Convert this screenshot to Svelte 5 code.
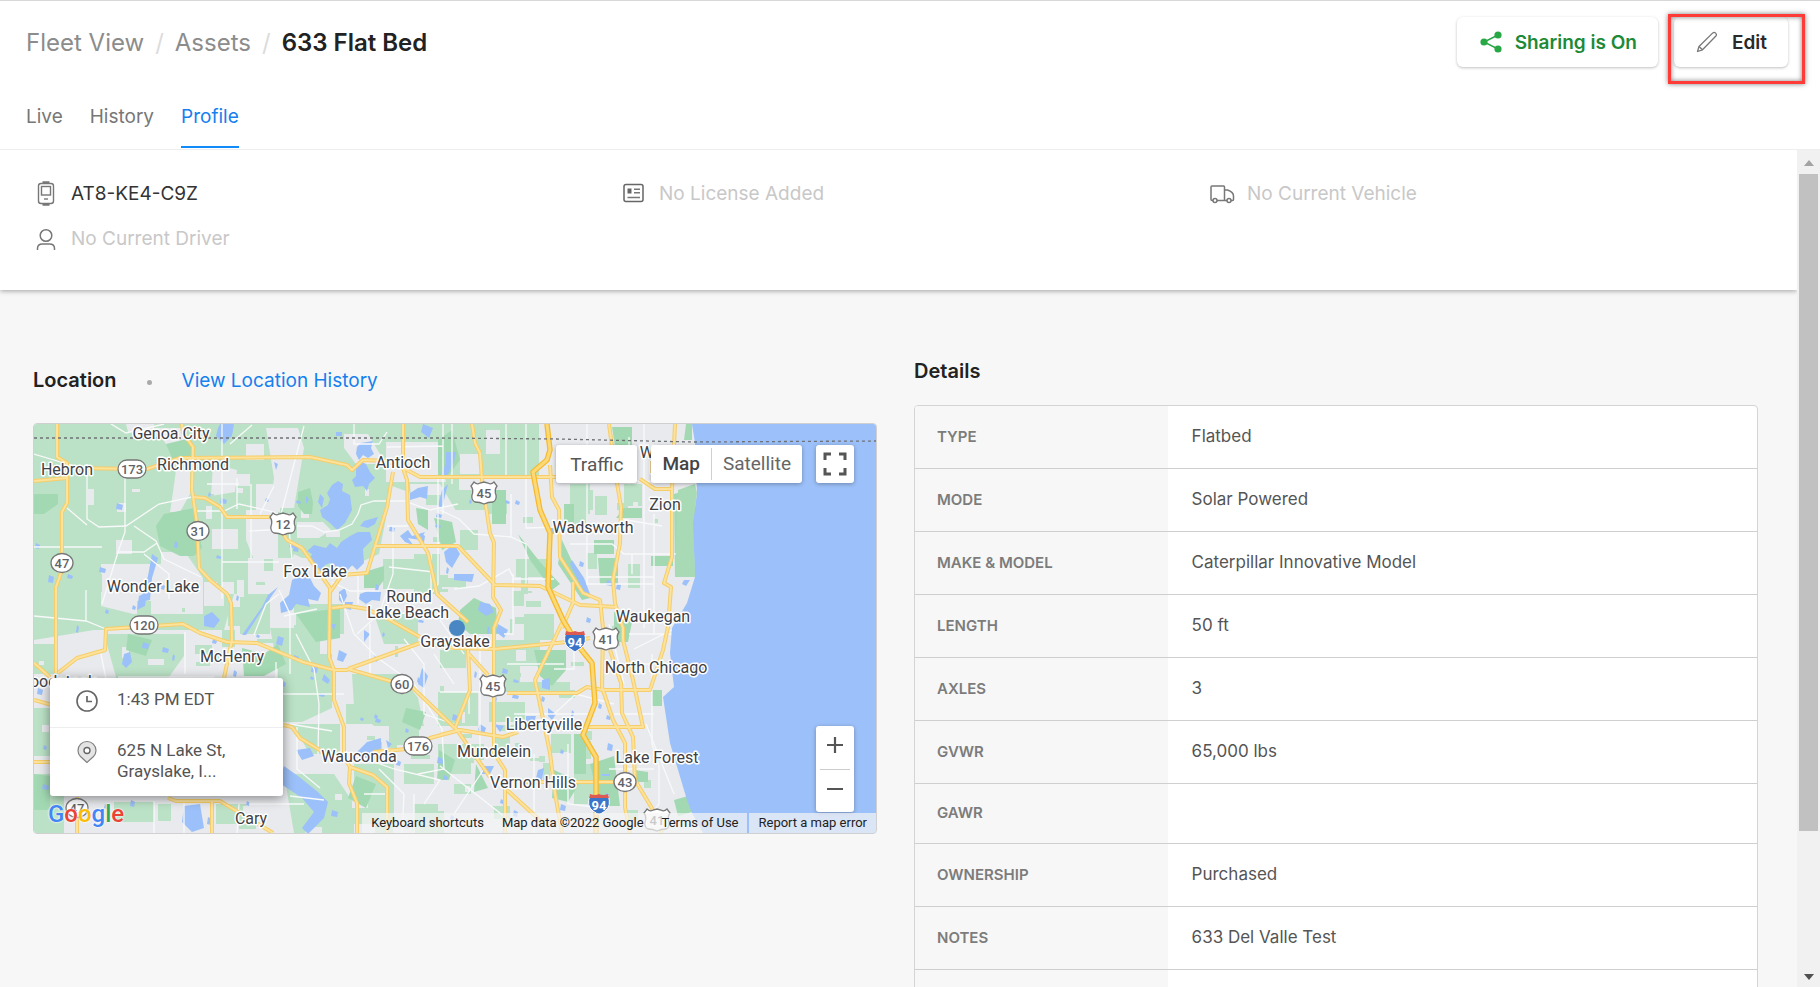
<script>
  const tabs = ["Live", "History", "Profile"];
  let activeTab = "Profile";
  let mapType = "Map";

  const details = [
    { label: "Type", value: "Flatbed" },
    { label: "Mode", value: "Solar Powered" },
    { label: "Make & Model", value: "Caterpillar Innovative Model" },
    { label: "Length", value: "50 ft" },
    { label: "Axles", value: "3" },
    { label: "GVWR", value: "65,000 lbs" },
    { label: "GAWR", value: "" },
    { label: "Ownership", value: "Purchased" },
    { label: "Notes", value: "633 Del Valle Test" },
    { label: "", value: "" },
  ];

  // Town labels, centered on x
  const towns = [
    ["Genoa City", 137, 15],
    ["Hebron", 33, 51],
    ["Richmond", 159, 46],
    ["Antioch", 369, 44],
    ["Fox Lake", 281, 153],
    ["Wonder Lake", 119, 168],
    ["Round", 375, 178],
    ["Lake Beach", 374, 194],
    ["McHenry", 198, 238],
    ["Woodstock", 22, 263],
    ["Wauconda", 325, 338],
    ["Cary", 217, 400],
    ["Wadsworth", 559, 109],
    ["Zion", 631, 86],
    ["Waukegan", 619, 198],
    ["Winthrop", 638, 34],
    ["Harbor", 640, 49],
    ["Grayslake", 421, 223],
    ["North Chicago", 622, 249],
    ["Libertyville", 510, 306],
    ["Mundelein", 460, 333],
    ["Lake Forest", 623, 339],
    ["Vernon Hills", 499, 364],
  ];

  const stateRoutes = [
    ["173", 98, 45],
    ["31", 164, 107],
    ["47", 28, 139],
    ["120", 110, 201],
    ["60", 368, 260],
    ["176", 384, 322],
    ["43", 591, 358],
    ["47", 43, 384],
  ];

  const usRoutes = [
    ["12", 249, 100],
    ["45", 450, 69],
    ["41", 572, 215],
    ["45", 459, 262],
    ["41", 623, 396],
  ];

  const interstates = [
    [541, 217],
    [565, 380],
  ];

  const highways = [
    "M23 0V33L33 39V79L28 88V146L22 163V249",
    "M0 57L33 54M33 44L113 45L146 34L276 33L313 41L318 46L329 36L353 37L369 44L386 53H523",
    "M606 55L621 65H638",
    "M148 0L149 9L159 23L158 66L163 99L165 144L176 156L193 170L197 179L198 216L190 254",
    "M159 73L171 74L186 83L193 93H239L253 116L268 124L296 164L295 233L300 246V276L310 303V333L316 343L339 351L353 363V409",
    "M316 343L315 359L323 379V409",
    "M369 0V44L373 56L374 96L394 129L403 170L434 198",
    "M359 48L353 83L333 149L308 151L296 168",
    "M341 122H424L461 161L506 162L546 181L583 183",
    "M438 0L441 19L446 29L448 56L456 109L460 119L459 173L467 186L460 204V329L471 346V409",
    "M516 41L518 73L525 86L526 133L549 169L566 176L569 204L568 263L579 296L591 319V383L596 409",
    "M575 0L583 59L587 83L586 119L579 156L581 179L589 204V216L599 256L609 303H553",
    "M576 226L587 259L588 289L599 313L601 356L619 386L628 409",
    "M641 0L638 66V133L630 159L637 163L634 203L629 226L616 266H569L553 263L543 269H473",
    "M314 245L356 257L379 264L423 306L456 353",
    "M314 245L386 219L421 224L461 225L533 218L556 214",
    "M528 199L501 256L516 329L521 369L528 409",
    "M434 226L436 266L421 304M434 229L454 251",
    "M406 311L426 306L469 313L484 308M426 306L396 314L384 324L339 328",
    "M24 249L43 234L71 226L72 205L149 200L166 209L193 218L223 219L269 238L300 246H314",
    "M0 239L16 253M0 276L18 281M0 338H20",
    "M249 301L258 303L266 314L289 328",
    "M134 374L142 377H186L239 409M178 376V409M43 373V409",
    "M298 184L314 182L333 185L356 196L386 213",
    "M473 366L509 399M480 358H579",
    "M539 158V179L528 204",
  ];

  const motorway =
    "M513 0L516 26L513 36L499 48L506 86L516 109L514 163L529 196L546 224L558 239L561 279L549 311L562 333V409";

  const minorRoads = [
    "M0 30L40 42M53 40V95L65 103L92 102L125 80L158 73M91 40V108L84 128L68 180M0 123H68",
    "M33 84L53 101M100 102L122 117L130 135L167 153M84 128H110L123 119M188 0V175M188 138H245",
    "M77 0L92 9L130 0M196 20L218 1M270 2L260 40L247 90M163 87H190L205 80L240 88L260 105",
    "M0 192L52 197L72 205M52 197V166M67 230L73 260M84 253H180M151 208V250M256 250V190L245 166",
    "M320 0V20H345L353 8M353 23L409 22M409 0V90M263 102L278 102L290 108L305 106L318 100L324 90L327 81L340 77H370L396 86L424 80",
    "M353 102H374M359 102V150L345 190L323 210M397 130V180M404 54V160L390 180",
    "M418 0V60M472 0V52M406 86L425 95L440 110L477 113L492 120V160M477 70V113M492 0V104L525 103",
    "M420 165L445 162L475 145L480 155L520 155M479 150V210H470M553 0V160H620M536 120H578L590 130H645",
    "M553 153H620M610 0V204M595 13V60M598 130V150M587 95L628 102M560 56L640 58M620 90V210",
    "M245 170L232 180L220 211M250 192L283 185M262 210L280 245L285 280L284 330M306 170L320 210L345 235L380 260L408 305L410 345L384 350",
    "M242 238V300M242 270H310M256 300L298 307M263 303V345L286 364M310 327L360 345L406 356L390 380",
    "M406 268H460M406 196L430 230M435 230V290M446 215V330M473 240H530M540 206V245H520M480 290H560M500 330V409",
    "M520 290L542 270L580 280M575 200L590 260M595 210H640M600 225L640 205M618 230V320L625 342V380L610 400",
    "M605 240H616M612 300L640 370M380 370V409M406 342L480 400M420 390L450 345M534 320V380L560 383",
    "M575 345H620M580 290H620M120 377V409M205 380L203 409M150 378V409M256 372L290 376M215 380H270M330 370H353",
    "M370 215L390 240V290L420 300M350 190L400 188M336 200V250M345 345L370 370L368 409M400 230L420 260",
    "M203 54V85M217 60V135M240 62L226 90M173 60H205M215 107L255 105L258 135M110 130L135 150L135 175",
    "M298 158L316 167H345M324 150V180M355 143L400 148",
  ];

  const grayFields =
    "M92 0h28v16l-10-8h-16zM142 46h14v24l-10 18h-10l3-20zM120 4h30v30h-8l-10-14zM179 40l24 6-2 22-24 4zM212 20h18v16h-18zM232 4h32l6 20-10 60h-24l4-30zM178 105h26v20h-26zM212 86h32v50h-24l-8-20zM67 140h60v-12h24l18 26v36h-70l-32-8zM214 134h60v36h-60zM170 158h20v24h-20zM190 50h26v12h-26zM222 60h24v28h-24zM263 98h26l8 8-12 8h-22zM310 10h24l18 30h-30l-12-16zM352 18h52l8 40h-60zM376 60h30l18 30v40h-26l-20-40zM426 30h20v20h-20zM452 6h14v24h-14z";

  const lightFields =
    "M0 0H505V52H425V78L400 90 380 70 358 62 345 130 300 150 260 130 246 170H200L190 206H60L0 216ZM0 220h24v30h-24zM70 210h80v22l-20 28h-46zM100 166h40v34h-40zM206 170h30v40h-30zM236 204h50v30h-44zM244 230h54v54l-30 14h-24zM258 300h48v30h-30zM318 250h48l18 24 6 28h-50l-20-20zM340 190h44v30h-34zM312 280h42v20h-42zM404 268h40v34h-40zM404 320h46v30h-46zM462 216h44v26h-44zM462 242h24v26h-24zM0 284h16v48h-16zM380 130h26v40h-26zM349 135h44v30h-44zM426 106h18v20h-18zM406 66h60v20h-50zM536 60h20v30h-20zM482 135h36v18h-36zM549 66h10v20h-10zM590 60h18v22h-18zM594 140h12v24h-12zM540 84h14v18h-14zM320 340h40v60h-40zM355 300h30v24h-30zM250 350h50l20 30v29h-60zM0 350h30v59h-30zM80 378h40v20h-40zM182 380h30v20h-30zM490 190h30v26h-30zM476 258h60v12h-60zM455 278h36v20h-36zM540 340h20v40h-20zM380 380h30v29h-30zM406 226h26v18h-26zM370 340h30v20h-30zM260 180h50v30h-50z";

  const darkFields =
    "M130 90l30-6 8 40-8 8h-14l-20-10-4-20zM132 20l25-6 2 22h-20zM0 70h24v10l-14 10h-10zM264 68l12-4 3 14-1 12-8 0-6-8zM330 148l20-6v14l-6 8h-14zM382 84l12 2v20l-10-6zM94 210l24 6-6 16-20-6zM208 224l22 6 14-10 8 20-22 12h-20zM262 190l44-6v30l-24 4zM426 186l14-12 22 10 2 26h-28l-12-10zM578 3h20v22l-16 4zM590 84h18v10h-26zM640 70l22-6-2 52 1 37h-20zM652 0h6v16h-8zM560 116h20v14h-20zM564 134h20v26h-18zM617 132h22v10h-22zM484 110l22 28 20 22-8 6-22-30zM528 116l14 30 14 28-8 2-24-36zM500 226h32v20l-14 16-12-10zM540 310h12v40h-12zM556 340l24-8 6 50h-20zM580 188l20 0-6 30h-14zM618 266h10v16h-10zM640 376l14-4 4 16-14 4zM458 66h14v34h-14zM404 16l14-10 8 30-12 16h-10zM400 94l18 4 4 20-14 8zM0 350l16 2v34h-16zM372 284l20 4-6 18-18-8zM322 352l20 8-10 24-18-10zM520 346l26 12-12 20-16-4zM530 80h10v18h-10zM600 346l14 2v10h-16zM405 326l16 10-6 20h-12zM442 340l12 24-14 4z";

  const lakes =
    "M186 0h14l-2 12-8 8-8-8 2-8zM298 61L304 57 309 60 308 67 316 71 318 86 311 99 303 106 296 99 288 93 286 86 294 81 296 75 293 69ZM323 23L327 19 339 17 337 24 340 30 334 34 329 31 325 36 322 30ZM326 37L332 40 336 48 341 54 335 60 333 67 329 62 321 63 318 56 322 52 322 44ZM316 112L324 108 336 108 338 116 329 125 330 139 323 146 318 141 312 148 296 139 291 141 286 149 281 140 275 136 278 130 273 127 280 121 292 124 296 119 303 124 307 118ZM326 102L330 97 344 93 341 100 334 104ZM258 156L266 152 276 154 280 162 287 169 284 177 274 175 276 183 262 180 258 186 247 189 246 179 255 171ZM326 170L334 167 347 168 346 177 338 176 332 180 325 175ZM376 69L384 64 394 62 393 75 386 73 376 76ZM366 112L374 106 378 112 391 108 386 116 374 114 379 121 371 118ZM305 168l6-4 2 8-4 8-4-4zM311 178l8 0-2 8-6-2zM286 70l4 4-2 10-4-6zM272 72l3 3-3 5zM412 28l10 0-2 10-8 16-4-4 4-12zM389 0l10 4-4 10-8-6zM118 130l6 4-6 20-2 22-10 2 8-26zM170 192l8-4 8 8-6 8-10-2zM90 230l6-2 2 10-6 6-4-4zM105 172l8-4-2 14-8 4zM244 163l-14 20-18 28-4 0 20-28 6-12zM240 278l6 10-2 20-8-10zM262 326l14-2 4 8-12 4zM323 328l10-10 14-4 0 10-12 12zM352 316l6 4-4 4zM250 342l14 10 20 16 10 10-4 16-16 16-6-6 12-16-12-14-24-16zM150 382l16-2 4 24-12 4-10-10zM408 66l6-6-6 24-4-2zM410 128l10-8 6 10-8 14-6-6zM420 150l20 0-2 8-18-2zM446 178l10 2 4 8-8 4-8-6zM464 200l10 6-4 8-8-6zM508 256l8-2 0 12-8-2zM514 284l8 6-4 6-4-4zM446 300l6 4-2 6-6-4zM492 292l10 0-2 6-8 0zM504 346l6-2-2 12-6-2zM448 342l12 0-4 8-8 0zM460 300l10 2-4 6zM538 136l12 18 6 16-4 2-10-20-6-12zM568 350l8 0v2h-8zM305 226l8 4-4 8-6-2zM388 244l6 8-4 12-6-4zM330 206l6 4-6 8zM244 212l6 2-2 8-6-2zM290 250l6 6-2 4-6-4zM296 200h6l-2 6zM650 156l6 0-4 6-4-2zM302 8h6v4h-6zM240 38l4 2-2 6zM340 230l6 4-4 4z";

  const lakeMichigan =
    "M658 0L661 19L663 69L659 99L661 153L653 179L638 204L636 229L640 263L629 273L636 319L653 376L658 389L669 409H842V0Z";

  // Small fields and ponds that break up the larger areas
  function scatter(count, seed, size, square) {
    let n = seed;
    const next = () => (n = (n * 16807) % 2147483647) / 2147483647;
    let d = "";
    for (let i = 0; i < count; i++) {
      const x = Math.round(next() * 620);
      const y = Math.round(60 + next() * 345);
      const w = Math.round(2 + next() * size);
      const h = Math.round(2 + next() * size);
      d += square
        ? `M${x} ${y}h${w}v${h}h${-w}z`
        : `M${x} ${y}l${w} 2l-1 ${h}l${-w} -1z`;
    }
    return d;
  }

  const smallGreen = scatter(90, 4711, 18, true);
  const smallGray = scatter(60, 977, 15, true);
  const ponds = scatter(100, 313, 4, false);
</script>

<div class="page">
  <header>
    <div class="title-row">
      <nav class="breadcrumb" aria-label="Breadcrumb">
        <a href="#fleet">Fleet View</a>
        <span class="slash">/</span>
        <a href="#assets">Assets</a>
        <span class="slash">/</span>
        <h1>633 Flat Bed</h1>
      </nav>
      <div class="actions">
        <button class="action sharing">
          <svg width="22" height="22" viewBox="0 0 22 22" aria-hidden="true">
            <path d="M18 4L4 11L18 18" fill="none" stroke="#28a745" stroke-width="1.4" />
            <circle cx="18" cy="4" r="3.6" fill="#28a745" />
            <circle cx="4" cy="11" r="3.6" fill="#28a745" />
            <circle cx="18" cy="18" r="3.6" fill="#28a745" />
          </svg>
          Sharing is On
        </button>
        <div class="edit-wrap">
          <button class="action edit">
            <svg width="22" height="22" viewBox="0 0 22 22" aria-hidden="true">
              <g fill="none" stroke="#777" stroke-width="1.3" stroke-linejoin="round">
                <path d="M1.500 20.500L3 15.500L16.800 1.900Q18.300 .8 19.600 2.100Q21 3.500 19.900 5L6.500 18.800Z" />
                <path d="M3 15.500L6.500 18.800" />
              </g>
            </svg>
            Edit
          </button>
          <span class="highlight"></span>
        </div>
      </div>
    </div>
    <nav class="tabs" aria-label="Asset pages">
      {#each tabs as tab}
        <a
          href="#{tab.toLowerCase()}"
          class:active={activeTab === tab}
          on:click={() => (activeTab = tab)}>{tab}</a
        >
      {/each}
    </nav>
  </header>

  <div class="body">
    <div class="content">
      <section class="summary">
        <div class="item device">
          <svg width="28" height="26" viewBox="0 0 28 26" aria-hidden="true">
            <g fill="none" stroke="#777" stroke-width="1.4">
              <rect x="6.500" y="2.500" width="15" height="20" rx="2.500" />
              <rect x="9.500" y="5.500" width="9" height="8.500" />
              <path d="M10.500 1.200h7M10.500 23.800h7" stroke-width="2" />
              <path d="M12 18h4" />
            </g>
          </svg>
          <span>AT8-KE4-C9Z</span>
        </div>
        <div class="item">
          <svg width="28" height="26" viewBox="0 0 28 26" aria-hidden="true">
            <rect x="4" y="3.500" width="19" height="17" rx="2" fill="none" stroke="#666" stroke-width="1.5" />
            <path d="M7.500 7.500h4v5h-4z" fill="#666" />
            <path d="M14 8.200h6M14 11.800h6M7.500 16.500h12.500" stroke="#777" stroke-width="1.4" />
          </svg>
          <span>No License Added</span>
        </div>
        <div class="item">
          <svg width="28" height="26" viewBox="0 0 28 26" aria-hidden="true">
            <g fill="none" stroke="#777" stroke-width="1.5">
              <path d="M5 19.500H4Q3 19.500 3 18.500V6Q3 5 4 5H15.500Q16.500 5 16.500 6V19.500H9M16.500 9h3Q25.500 11 25.500 15V18.500Q25.500 19.500 24.500 19.500H23M19 19.500H16" />
              <circle cx="7" cy="19.500" r="2" />
              <circle cx="21" cy="19.500" r="2" />
            </g>
          </svg>
          <span>No Current Vehicle</span>
        </div>
        <div class="item">
          <svg width="28" height="26" viewBox="0 0 28 26" aria-hidden="true">
            <g fill="none" stroke="#777" stroke-width="1.5">
              <circle cx="14" cy="9.500" r="5.800" />
              <path d="M5.500 24V22.500Q5.500 18 10.500 18H17.500Q22.500 18 22.500 22.500V24" />
            </g>
          </svg>
          <span>No Current Driver</span>
        </div>
      </section>

      <main>
        <section class="location">
          <div class="location-head">
            <h2>Location</h2>
            <span class="dot"></span>
            <a href="#history">View Location History</a>
          </div>

          <div class="map">
            <svg class="canvas" viewBox="0 0 842 409" preserveAspectRatio="xMinYMin slice" role="img" aria-label="Map of Grayslake and surroundings">
              <rect width="842" height="409" fill="#e8eaed" />
              <path d={lightFields} fill="#bbe2c6" />
              <path d={grayFields} fill="#e8eaed" />
              <path d={smallGreen} fill="#bbe2c6" />
              <path d={smallGray} fill="#e8eaed" />
              <path d={darkFields} fill="#a2d9b2" />
              <path d={lakes} fill="#9cc0f9" />
              <path d={ponds} fill="#9cc0f9" />
              <g fill="none" stroke="#f8f9fa" stroke-width="1.300">
                {#each minorRoads as d}
                  <path {d} />
                {/each}
              </g>
              <path d={lakeMichigan} fill="#9cc0f9" />
              <path d="M661 60L663 69L659 99L661 153H641L644 66Z" fill="#a8dab5" />
              <g fill="none" stroke-linejoin="round">
                {#each highways as d}
                  <path {d} stroke="#f6cd68" stroke-width="4" />
                {/each}
                {#each highways as d}
                  <path {d} stroke="#fde29b" stroke-width="2" />
                {/each}
                <path d={motorway} stroke="#f5b92f" stroke-width="5.500" />
                <path d={motorway} stroke="#fdd975" stroke-width="3" />
              </g>
              <path d="M0 14H406L523 15L659 18L842 17" fill="none" stroke="#6f7275" stroke-width="1.300" stroke-dasharray="3 3" />

              {#each usRoutes as [label, x, y]}
                <g transform="translate({x} {y})">
                  <path d="M-10-11Q-7-8-4-10L0-11L4-10Q7-8 10-11L13-7Q10-3 12 2Q13 7 9 9Q4 9 0 11Q-4 9-9 9Q-13 7-12 2Q-10-3-13-7Z" fill="#fff" stroke="#777" stroke-width="1.300" />
                  <text class="route" y="5">{label}</text>
                </g>
              {/each}
              {#each stateRoutes as [label, x, y]}
                <g transform="translate({x} {y})">
                  {#if label.length === 3}
                    <rect x="-14" y="-9" width="28" height="18" rx="9" fill="#fff" stroke="#777" stroke-width="1.300" />
                  {:else}
                    <ellipse rx="11" ry="9.500" fill="#fff" stroke="#777" stroke-width="1.300" />
                  {/if}
                  <text class="route" y="5">{label}</text>
                </g>
              {/each}
              {#each interstates as [x, y]}
                <g transform="translate({x} {y})">
                  <path d="M-9-9Q-4-7 0-9Q4-7 9-9Q13 2 6 7L0 11L-6 7Q-13 2-9-9Z" fill="#3a75c9" stroke="#fff" />
                  <path d="M-9-10Q-4-8 0-10Q4-8 9-10L10-6H-10Z" fill="#dc5a52" />
                  <text class="route interstate" y="6">94</text>
                </g>
              {/each}
              {#each towns as [name, x, y]}
                <text class="town" {x} {y}>{name}</text>
              {/each}
              <circle cx="423" cy="204" r="8" fill="#4887c3" />
            </svg>

            <div class="map-top">
              <button class="map-button">Traffic</button>
              <div class="map-types">
                {#each ["Map", "Satellite"] as type}
                  <button
                    class:selected={mapType === type}
                    on:click={() => (mapType = type)}>{type}</button
                  >
                {/each}
              </div>
              <button class="map-button square" aria-label="Toggle fullscreen view">
                <svg width="24" height="24" viewBox="0 0 24 24">
                  <path d="M2 8V2H8M16 2H22V8M22 16V22H16M8 22H2V16" fill="none" stroke="#555" stroke-width="3" />
                </svg>
              </button>
            </div>

            <div class="zoom">
              <button aria-label="Zoom in">
                <svg width="16" height="16" viewBox="0 0 16 16"><path d="M8 0V16M0 8H16" stroke="#555" stroke-width="2.200" /></svg>
              </button>
              <button aria-label="Zoom out">
                <svg width="16" height="16" viewBox="0 0 16 16"><path d="M0 8H16" stroke="#555" stroke-width="2.200" /></svg>
              </button>
            </div>

            <div class="info">
              <div class="info-row">
                <svg width="24" height="24" viewBox="0 0 24 24" aria-hidden="true">
                  <circle cx="12" cy="12" r="10" fill="#fff" stroke="#666" stroke-width="1.600" />
                  <path d="M12 7V12.500H17" fill="none" stroke="#666" stroke-width="1.700" />
                </svg>
                <span>1:43 PM EDT</span>
              </div>
              <div class="info-row address">
                <svg width="24" height="24" viewBox="0 0 24 24" aria-hidden="true">
                  <path d="M12 22.500L5.500 16.500Q3 14 3 10.500A9 9 0 0 1 21 10.500Q21 14 18.500 16.500Z" fill="#e4e4e4" stroke="#808080" stroke-width="1.200" />
                  <circle cx="12" cy="10.500" r="3" fill="#fff" stroke="#666" stroke-width="1.400" />
                </svg>
                <span>625 N Lake St,<br />Grayslake, I...</span>
              </div>
            </div>

            <a class="google" href="#google" aria-label="Google"
              ><span class="blue">G</span><span class="red">o</span><span class="yellow">o</span><span
                class="blue">g</span
              ><span class="green">l</span><span class="red">e</span></a
            >

            <div class="attribution">
              <button>Keyboard shortcuts</button>
              <span>Map data ©2022 Google</span>
              <a href="#terms">Terms of Use</a>
              <a href="#report" class="report">Report a map error</a>
            </div>
          </div>
        </section>

        <section class="details">
          <h2>Details</h2>
          <div class="table-frame">
            <table>
              <tbody>
                {#each details as row}
                  <tr>
                    <th scope="row">{row.label}</th>
                    <td>{row.value}</td>
                  </tr>
                {/each}
              </tbody>
            </table>
          </div>
        </section>
      </main>
    </div>

    <div class="scrollbar" aria-hidden="true">
      <svg width="10" height="6" viewBox="0 0 10 6"><path d="M0 6L5 0L10 6Z" fill="#a3a3a3" /></svg>
      <div class="track"><div class="thumb"></div></div>
      <svg width="10" height="6" viewBox="0 0 10 6"><path d="M0 0H10L5 6Z" fill="#505050" /></svg>
    </div>
  </div>
</div>

<style>
  :global(body) {
    margin: 0;
    font-family: Inter, "Liberation Sans", sans-serif;
    color: #222;
  }

  .page {
    display: flex;
    flex-direction: column;
    height: 100vh;
    box-sizing: border-box;
    border-top: 1px solid #d8d8d8;
    background: #fff;
    overflow: hidden;
  }

  a {
    text-decoration: none;
  }

  button {
    font: inherit;
    border: none;
    background: none;
    padding: 0;
    cursor: pointer;
  }

  header {
    border-bottom: 1px solid #eee;
  }

  .title-row {
    display: flex;
    justify-content: space-between;
    align-items: flex-start;
    padding: 16px 32px 0 26px;
  }

  .breadcrumb {
    display: flex;
    align-items: center;
    gap: 11px;
    height: 50px;
    font-size: 24px;
  }

  .breadcrumb a {
    color: #8c8c8c;
  }

  .slash {
    color: #dcdcdc;
  }

  h1 {
    margin: 0;
    font-size: 24px;
    font-weight: 600;
  }

  .actions {
    display: flex;
    gap: 16px;
  }

  .action {
    display: flex;
    align-items: center;
    height: 50px;
    font-size: 19px;
    font-weight: 600;
    border-radius: 6px;
    background: #fff;
    box-shadow: 0 1px 3px rgba(0, 0, 0, 0.25);
  }

  .sharing {
    gap: 13px;
    padding: 0 21px 0 23px;
    color: #1d8a37;
  }

  .edit {
    gap: 14px;
    padding: 0 21px 0 22px;
    color: #2a2a2a;
  }

  .edit-wrap {
    position: relative;
  }

  .highlight {
    position: absolute;
    inset: -3px -17px -17px -6px;
    border: 3px solid #ff3b38;
    box-shadow:
      0 0 5px rgba(0, 0, 0, 0.5),
      inset 0 0 5px rgba(0, 0, 0, 0.5);
    pointer-events: none;
  }

  .tabs {
    display: flex;
    gap: 27px;
    padding: 36px 26px 1px;
  }

  .tabs a {
    padding-bottom: 15px;
    font-size: 19px;
    line-height: 28px;
    color: #777;
    border-bottom: 2px solid transparent;
  }

  .tabs a.active {
    color: #1580ee;
    border-bottom-color: #108bf8;
  }

  .body {
    display: flex;
    flex: 1;
    min-height: 0;
  }

  .content {
    flex: 1;
    overflow: hidden;
    background: #f7f7f7;
  }

  .summary {
    position: relative;
    display: grid;
    grid-template-columns: repeat(3, 1fr);
    row-gap: 19px;
    padding: 31px 1px 38px 32px;
    background: #fff;
    box-shadow: 0 1px 5px rgba(0, 0, 0, 0.35);
  }

  .item {
    display: flex;
    align-items: center;
    gap: 11px;
    font-size: 19px;
    line-height: 26px;
    color: #c8c8c8;
  }

  .device {
    color: #333;
  }

  main {
    display: grid;
    grid-template-columns: 1fr 1fr;
    column-gap: 37px;
    align-items: start;
    padding: 68px 39px 40px 33px;
  }

  h2 {
    margin: 0;
    font-size: 20px;
    line-height: 26px;
    font-weight: 600;
  }

  .location-head {
    display: flex;
    align-items: center;
    height: 26px;
    margin: 9px 0 30px;
    font-size: 19px;
  }

  .location-head a {
    color: #1580ee;
  }

  .dot {
    width: 5px;
    height: 5px;
    margin: 4px 30px 0;
    border-radius: 50%;
    background: #aaa;
  }

  .map {
    position: relative;
    aspect-ratio: 842 / 409;
    overflow: hidden;
    border: 1px solid #d0d0d0;
    border-radius: 4px;
    font-family: Roboto, sans-serif;
  }

  .canvas {
    display: block;
    width: 100%;
    height: 100%;
  }

  .town {
    font-size: 16px;
    text-anchor: middle;
    fill: #3f4245;
    stroke: #fff;
    stroke-width: 3px;
    stroke-linejoin: round;
    paint-order: stroke;
  }

  .route {
    font-size: 13px;
    font-weight: 500;
    text-anchor: middle;
    fill: #5f6368;
  }

  .interstate {
    font-weight: 700;
    fill: #fff;
  }

  .map-top {
    position: absolute;
    top: 21px;
    right: 22px;
    display: flex;
    gap: 14px;
    font-size: 19px;
    color: #565656;
  }

  .map-button,
  .map-types,
  .zoom {
    height: 38px;
    border-radius: 3px;
    background: #fff;
    color: #565656;
    box-shadow: 0 1px 4px rgba(0, 0, 0, 0.3);
  }

  .map-button {
    padding: 0 14px;
  }

  .square {
    display: flex;
    align-items: center;
    justify-content: center;
    width: 38px;
    padding: 0;
  }

  .map-types {
    display: flex;
    align-items: center;
  }

  .map-types button {
    padding: 0 11px;
    line-height: 32px;
    color: #666;
  }

  .map-types .selected {
    font-weight: 500;
    color: #444;
  }

  .map-types button + button {
    border-left: 1px solid #d0d0d0;
  }

  .zoom {
    position: absolute;
    right: 22px;
    bottom: 21px;
    display: flex;
    flex-direction: column;
    width: 38px;
    height: 86px;
  }

  .zoom button {
    flex: 1;
    margin: 0 4px;
  }

  .zoom button + button {
    border-top: 1px solid #ccc;
  }

  .info {
    position: absolute;
    left: 16px;
    bottom: 37px;
    width: 233px;
    border-radius: 3px;
    background: #fff;
    box-shadow: 0 2px 12px rgba(0, 0, 0, 0.45);
    font-size: 17px;
    line-height: 21px;
    color: #555;
  }

  .info-row {
    display: flex;
    gap: 18px;
    padding: 11px 20px 14px 25px;
  }

  .address {
    padding-top: 12px;
    border-top: 1px solid #eee;
  }

  .google {
    position: absolute;
    left: 14px;
    bottom: 4px;
    font-size: 24px;
    line-height: 30px;
    font-weight: 500;
    text-shadow:
      0 0 2px #fff,
      0 0 2px #fff;
  }

  .blue {
    color: #4285f4;
  }

  .red {
    color: #ea4335;
  }

  .yellow {
    color: #fbbc05;
  }

  .green {
    color: #34a853;
  }

  .attribution {
    position: absolute;
    right: 0;
    bottom: 0;
    display: flex;
    font-size: 13px;
    line-height: 20px;
  }

  .attribution > * {
    padding: 0 9px;
    color: #222;
    background: rgba(245, 245, 245, 0.7);
  }

  .attribution .report {
    margin-left: 2px;
  }

  .table-frame {
    margin-top: 21px;
    border: 1px solid #d4d4d4;
    border-radius: 4px;
    background: #fff;
    overflow: hidden;
  }

  table {
    width: 100%;
    border-collapse: collapse;
    text-align: left;
  }

  th {
    width: 30%;
    box-sizing: border-box;
    padding: 19px 22px 20px;
    font-size: 15px;
    line-height: 20px;
    font-weight: 600;
    text-transform: uppercase;
    color: #7c7c7c;
    background: #f7f7f7;
  }

  td {
    padding: 17px 24px 19px;
    font-size: 17px;
    line-height: 26px;
    color: #555;
  }

  td:empty {
    padding: 0;
  }

  tr + tr {
    border-top: 1px solid #cfcfcf;
  }

  .scrollbar {
    display: flex;
    flex-direction: column;
    align-items: center;
    gap: 8px;
    width: 23px;
    padding: 10px 0 7px;
    box-sizing: border-box;
    background: #f1f1f1;
  }

  .track {
    flex: 1;
    width: 19px;
  }

  .thumb {
    height: 83%;
    background: #c1c1c1;
  }
</style>
